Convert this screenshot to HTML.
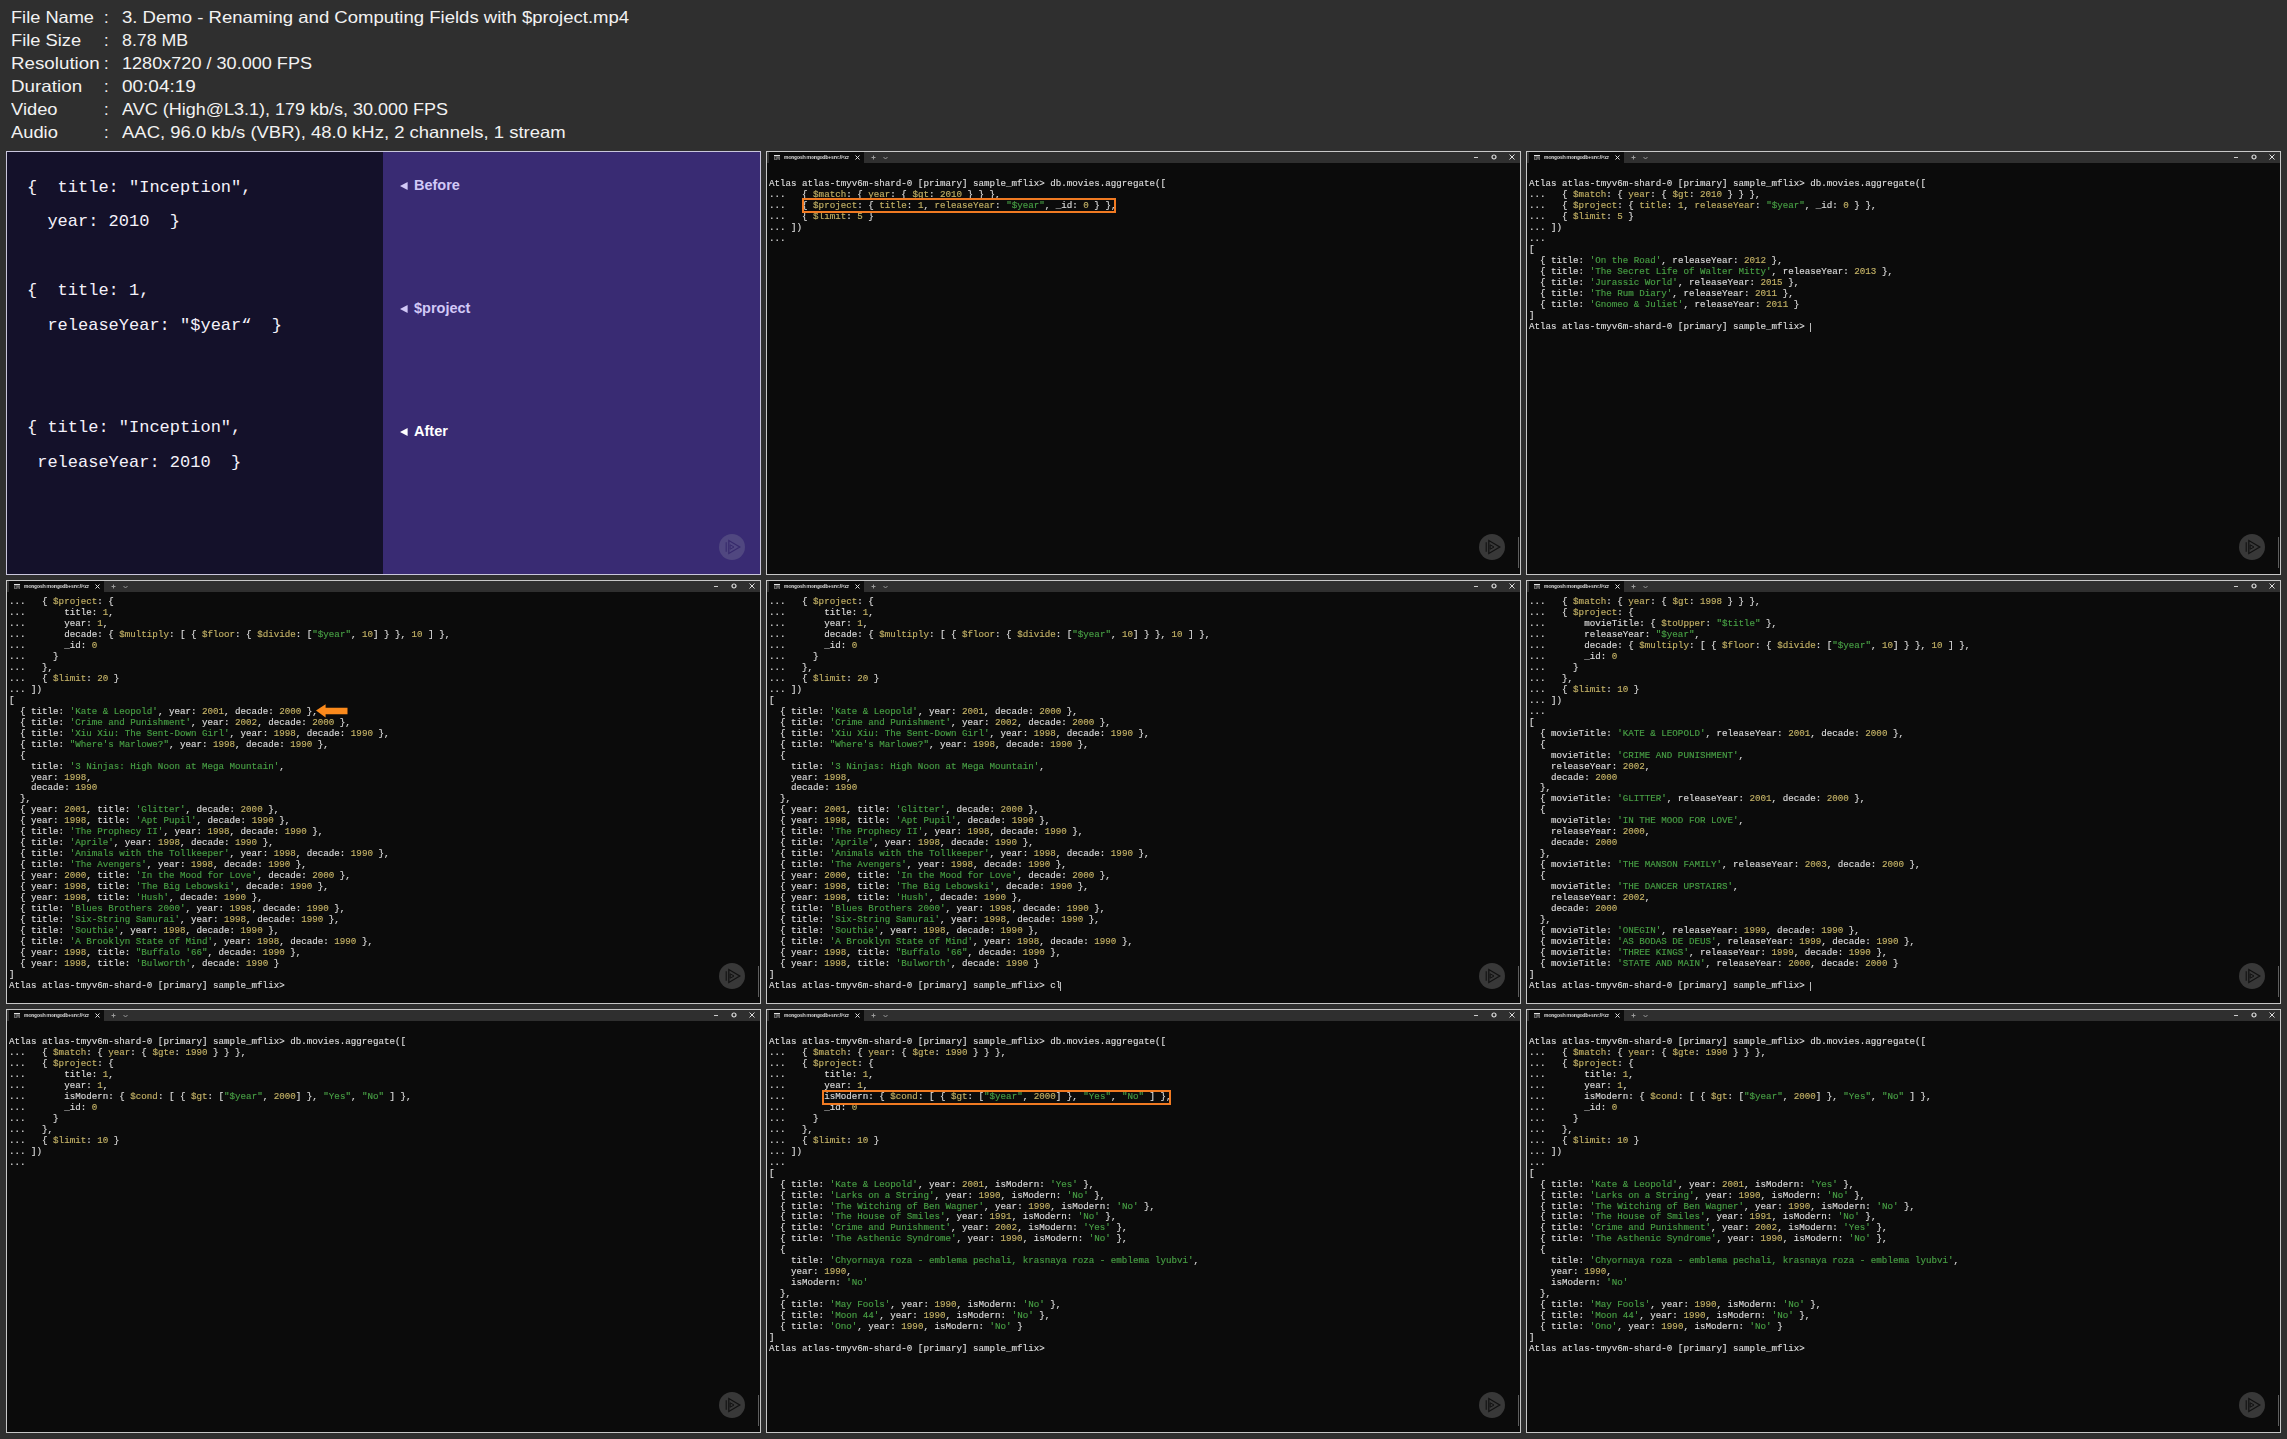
<!DOCTYPE html><html><head><meta charset="utf-8"><style>
*{margin:0;padding:0;box-sizing:border-box}
html,body{width:2287px;height:1439px;overflow:hidden;background:#2f2f2f}
body{position:relative;font-family:"Liberation Sans",sans-serif}
.hd{position:absolute;left:0;top:0;color:#f2f2f2;font-size:16.5px;white-space:pre}
.hd div{position:absolute;white-space:pre;line-height:20px}
.fr{position:absolute;width:755px;height:424px;border:1px solid #c8c8c8;overflow:hidden}
.term{background:#0b0b0b}
.tb{position:absolute;left:0;top:0;width:753px;height:11px;background:#2f2f2f}
.tab{position:absolute;left:2px;top:0;width:95px;height:11px;background:#0b0b0b}
.tt{position:absolute;left:16.5px;top:1.1px;font-size:6px;line-height:9px;color:#dcdcdc;font-weight:bold;white-space:pre;letter-spacing:-0.2px;transform:scaleX(0.835);transform-origin:0 0;will-change:transform}
.code{position:absolute;left:1.9px;font-family:"Liberation Mono",monospace;font-size:9.2px;line-height:10.97px;color:#dcdcdc;white-space:pre;will-change:transform;-webkit-text-stroke:0.15px currentColor}
.code b{font-weight:normal}
.play{position:absolute;width:26px;height:26px;border-radius:50%;background:#383838}
.sb{position:absolute;left:751px;top:385px;width:1px;height:31px;background:#5e5e5e}
</style></head><body><div class="hd"><div style="left:11px;top:7.3px;transform:scaleX(1.103);transform-origin:0 0">File Name</div><div style="left:104px;top:7.3px">:</div><div class="hv" style="left:121.5px;top:7.3px;transform:scaleX(1.124);transform-origin:0 0">3. Demo - Renaming and Computing Fields with $project.mp4</div><div style="left:11px;top:30.3px;transform:scaleX(1.108);transform-origin:0 0">File Size</div><div style="left:104px;top:30.3px">:</div><div class="hv" style="left:121.5px;top:30.3px;transform:scaleX(1.077);transform-origin:0 0">8.78 MB</div><div style="left:11px;top:53.3px;transform:scaleX(1.137);transform-origin:0 0">Resolution</div><div style="left:104px;top:53.3px">:</div><div class="hv" style="left:121.5px;top:53.3px;transform:scaleX(1.096);transform-origin:0 0">1280x720 / 30.000 FPS</div><div style="left:11px;top:76.3px;transform:scaleX(1.140);transform-origin:0 0">Duration</div><div style="left:104px;top:76.3px">:</div><div class="hv" style="left:121.5px;top:76.3px;transform:scaleX(1.149);transform-origin:0 0">00:04:19</div><div style="left:11px;top:99.3px;transform:scaleX(1.110);transform-origin:0 0">Video</div><div style="left:104px;top:99.3px">:</div><div class="hv" style="left:121.5px;top:99.3px;transform:scaleX(1.091);transform-origin:0 0">AVC (High@L3.1), 179 kb/s, 30.000 FPS</div><div style="left:11px;top:122.3px;transform:scaleX(1.110);transform-origin:0 0">Audio</div><div style="left:104px;top:122.3px">:</div><div class="hv" style="left:121.5px;top:122.3px;transform:scaleX(1.120);transform-origin:0 0">AAC, 96.0 kb/s (VBR), 48.0 kHz, 2 channels, 1 stream</div></div>
<div class="fr" style="left:6px;top:151px;background:#14112a;border-color:#c9c6dc">
<div style="position:absolute;left:376px;top:0;width:377px;height:422px;background:#392b73"></div>
<div style="position:absolute;left:20px;top:1.5px;font-family:'Liberation Mono',monospace;font-size:17px;color:#f4f2fa;white-space:pre">
<div style="position:absolute;top:24px">{  title: "Inception",</div>
<div style="position:absolute;top:58px">  year: 2010  }</div>
<div style="position:absolute;top:127px">{  title: 1,</div>
<div style="position:absolute;top:162px">  releaseYear: "$year&#8220;  }</div>
<div style="position:absolute;top:264px">{ title: "Inception",</div>
<div style="position:absolute;top:299px"> releaseYear: 2010  }</div>
</div>
<svg style="position:absolute;left:392.5px;top:30px" width="8" height="8" viewBox="0 0 8 8"><path d="M0 4L7.6 0V8Z" fill="#d2c9f7"/></svg>
<div style="position:absolute;left:407px;top:24.5px;font-weight:bold;font-size:14.5px;color:#d2c9f7;white-space:pre">Before</div>
<svg style="position:absolute;left:392.5px;top:153px" width="8" height="8" viewBox="0 0 8 8"><path d="M0 4L7.6 0V8Z" fill="#d2c9f7"/></svg>
<div style="position:absolute;left:407px;top:147.5px;font-weight:bold;font-size:14.5px;color:#d2c9f7;white-space:pre">$project</div>
<svg style="position:absolute;left:392.5px;top:276px" width="8" height="8" viewBox="0 0 8 8"><path d="M0 4L7.6 0V8Z" fill="#ffffff"/></svg>
<div style="position:absolute;left:407px;top:270.5px;font-weight:bold;font-size:14.5px;color:#ffffff;white-space:pre">After</div>
<svg style="position:absolute;left:712px;top:382px" width="26" height="26" viewBox="0 0 26 26"><circle cx="13" cy="13" r="13" fill="#504780"/><path d="M9.8 6.6L20.8 13L9.8 19.4Z" fill="none" stroke="#372a6c" stroke-width="1.2"/><path d="M7.2 8.3V17.7" stroke="#372a6c" stroke-width="1.1"/><path d="M11.2 10.8L15 13L11.2 15.2Z" fill="none" stroke="#372a6c" stroke-width="1"/></svg></div>
<div class="fr term" style="left:766px;top:151px"><div class="tb"><div class="tab"></div>
<svg style="position:absolute;left:7px;top:3px" width="6" height="5" viewBox="0 0 6 5"><rect x="0" y="0" width="6" height="1" fill="#e0e0e0"/><rect x="0" y="1.2" width="6" height="3.8" fill="#6a6a6a"/><path d="M1 2L2.3 3L1 4" stroke="#151515" stroke-width="0.8" fill="none"/><path d="M3 4.2H5" stroke="#151515" stroke-width="0.8"/></svg>
<div class="tt">mongosh mongodb+srv://&lt;cr</div>
<svg style="position:absolute;left:88px;top:3px" width="5" height="5" viewBox="0 0 5 5"><path d="M0.5 0.5L4.5 4.5M4.5 0.5L0.5 4.5" stroke="#ddd" stroke-width="1"/></svg>
<svg style="position:absolute;left:104px;top:3px" width="5" height="5" viewBox="0 0 5 5"><path d="M2.5 0.5V4.5M0.5 2.5H4.5" stroke="#999" stroke-width="1"/></svg>
<svg style="position:absolute;left:116px;top:4px" width="5" height="4" viewBox="0 0 5 4"><path d="M0.5 1L2.5 3L4.5 1" stroke="#999" fill="none" stroke-width="1"/></svg>
<svg style="position:absolute;left:706px;top:2.5px" width="6" height="5" viewBox="0 0 6 5"><path d="M1 2.5H5" stroke="#ccc" stroke-width="1"/></svg>
<svg style="position:absolute;left:724px;top:2px" width="6" height="6" viewBox="0 0 6 6"><circle cx="3" cy="3" r="2" fill="none" stroke="#ddd" stroke-width="1.2"/></svg>
<svg style="position:absolute;left:742px;top:2px" width="6" height="6" viewBox="0 0 6 6"><path d="M0.5 0.5L5.5 5.5M5.5 0.5L0.5 5.5" stroke="#ddd" stroke-width="1"/></svg>
</div>
<div class="code" style="top:16.02px">
<span style="color:#dcdcdc">Atlas atlas-tmyv6m-shard-0 [primary] sample_mflix&gt; db.movies.aggregate([</span>
...   { <b style="color:#c4b266">$match</b>: { <b style="color:#c4b266">year</b>: { <b style="color:#c4b266">$gt</b>: <b style="color:#c4b266">2010</b> } } },
...   { <b style="color:#c4b266">$project</b>: { <b style="color:#c4b266">title</b>: <b style="color:#c4b266">1</b>, <b style="color:#c4b266">releaseYear</b>: <b style="color:#48a045">"$year"</b>, _id: <b style="color:#c4b266">0</b> } },
...   { <b style="color:#c4b266">$limit</b>: <b style="color:#c4b266">5</b> }
... ])
...</div><div style="position:absolute;left:35px;top:45.5px;width:314px;height:15.5px;border:2px solid #f07a22"></div><svg style="position:absolute;left:712px;top:382px" width="26" height="26" viewBox="0 0 26 26"><circle cx="13" cy="13" r="13" fill="#383838"/><path d="M9.8 6.6L20.8 13L9.8 19.4Z" fill="none" stroke="#111" stroke-width="1.2"/><path d="M7.2 8.3V17.7" stroke="#111" stroke-width="1.1"/><path d="M11.2 10.8L15 13L11.2 15.2Z" fill="none" stroke="#111" stroke-width="1"/></svg><div class="sb"></div></div>
<div class="fr term" style="left:1526px;top:151px"><div class="tb"><div class="tab"></div>
<svg style="position:absolute;left:7px;top:3px" width="6" height="5" viewBox="0 0 6 5"><rect x="0" y="0" width="6" height="1" fill="#e0e0e0"/><rect x="0" y="1.2" width="6" height="3.8" fill="#6a6a6a"/><path d="M1 2L2.3 3L1 4" stroke="#151515" stroke-width="0.8" fill="none"/><path d="M3 4.2H5" stroke="#151515" stroke-width="0.8"/></svg>
<div class="tt">mongosh mongodb+srv://&lt;cr</div>
<svg style="position:absolute;left:88px;top:3px" width="5" height="5" viewBox="0 0 5 5"><path d="M0.5 0.5L4.5 4.5M4.5 0.5L0.5 4.5" stroke="#ddd" stroke-width="1"/></svg>
<svg style="position:absolute;left:104px;top:3px" width="5" height="5" viewBox="0 0 5 5"><path d="M2.5 0.5V4.5M0.5 2.5H4.5" stroke="#999" stroke-width="1"/></svg>
<svg style="position:absolute;left:116px;top:4px" width="5" height="4" viewBox="0 0 5 4"><path d="M0.5 1L2.5 3L4.5 1" stroke="#999" fill="none" stroke-width="1"/></svg>
<svg style="position:absolute;left:706px;top:2.5px" width="6" height="5" viewBox="0 0 6 5"><path d="M1 2.5H5" stroke="#ccc" stroke-width="1"/></svg>
<svg style="position:absolute;left:724px;top:2px" width="6" height="6" viewBox="0 0 6 6"><circle cx="3" cy="3" r="2" fill="none" stroke="#ddd" stroke-width="1.2"/></svg>
<svg style="position:absolute;left:742px;top:2px" width="6" height="6" viewBox="0 0 6 6"><path d="M0.5 0.5L5.5 5.5M5.5 0.5L0.5 5.5" stroke="#ddd" stroke-width="1"/></svg>
</div>
<div class="code" style="top:16.02px">
<span style="color:#dcdcdc">Atlas atlas-tmyv6m-shard-0 [primary] sample_mflix&gt; db.movies.aggregate([</span>
...   { <b style="color:#c4b266">$match</b>: { <b style="color:#c4b266">year</b>: { <b style="color:#c4b266">$gt</b>: <b style="color:#c4b266">2010</b> } } },
...   { <b style="color:#c4b266">$project</b>: { <b style="color:#c4b266">title</b>: <b style="color:#c4b266">1</b>, <b style="color:#c4b266">releaseYear</b>: <b style="color:#48a045">"$year"</b>, _id: <b style="color:#c4b266">0</b> } },
...   { <b style="color:#c4b266">$limit</b>: <b style="color:#c4b266">5</b> }
... ])
...
[
  { title: <b style="color:#48a045">'On the Road'</b>, releaseYear: <b style="color:#c4b266">2012</b> },
  { title: <b style="color:#48a045">'The Secret Life of Walter Mitty'</b>, releaseYear: <b style="color:#c4b266">2013</b> },
  { title: <b style="color:#48a045">'Jurassic World'</b>, releaseYear: <b style="color:#c4b266">2015</b> },
  { title: <b style="color:#48a045">'The Rum Diary'</b>, releaseYear: <b style="color:#c4b266">2011</b> },
  { title: <b style="color:#48a045">'Gnomeo &amp; Juliet'</b>, releaseYear: <b style="color:#c4b266">2011</b> }
]
<span style="color:#dcdcdc">Atlas atlas-tmyv6m-shard-0 [primary] sample_mflix&gt; </span></div><div style="position:absolute;left:282.87px;top:170.60px;width:1px;height:9px;background:#bbbbbb"></div><svg style="position:absolute;left:712px;top:382px" width="26" height="26" viewBox="0 0 26 26"><circle cx="13" cy="13" r="13" fill="#383838"/><path d="M9.8 6.6L20.8 13L9.8 19.4Z" fill="none" stroke="#111" stroke-width="1.2"/><path d="M7.2 8.3V17.7" stroke="#111" stroke-width="1.1"/><path d="M11.2 10.8L15 13L11.2 15.2Z" fill="none" stroke="#111" stroke-width="1"/></svg><div class="sb"></div></div>
<div class="fr term" style="left:6px;top:580px"><div class="tb"><div class="tab"></div>
<svg style="position:absolute;left:7px;top:3px" width="6" height="5" viewBox="0 0 6 5"><rect x="0" y="0" width="6" height="1" fill="#e0e0e0"/><rect x="0" y="1.2" width="6" height="3.8" fill="#6a6a6a"/><path d="M1 2L2.3 3L1 4" stroke="#151515" stroke-width="0.8" fill="none"/><path d="M3 4.2H5" stroke="#151515" stroke-width="0.8"/></svg>
<div class="tt">mongosh mongodb+srv://&lt;cr</div>
<svg style="position:absolute;left:88px;top:3px" width="5" height="5" viewBox="0 0 5 5"><path d="M0.5 0.5L4.5 4.5M4.5 0.5L0.5 4.5" stroke="#ddd" stroke-width="1"/></svg>
<svg style="position:absolute;left:104px;top:3px" width="5" height="5" viewBox="0 0 5 5"><path d="M2.5 0.5V4.5M0.5 2.5H4.5" stroke="#999" stroke-width="1"/></svg>
<svg style="position:absolute;left:116px;top:4px" width="5" height="4" viewBox="0 0 5 4"><path d="M0.5 1L2.5 3L4.5 1" stroke="#999" fill="none" stroke-width="1"/></svg>
<svg style="position:absolute;left:706px;top:2.5px" width="6" height="5" viewBox="0 0 6 5"><path d="M1 2.5H5" stroke="#ccc" stroke-width="1"/></svg>
<svg style="position:absolute;left:724px;top:2px" width="6" height="6" viewBox="0 0 6 6"><circle cx="3" cy="3" r="2" fill="none" stroke="#ddd" stroke-width="1.2"/></svg>
<svg style="position:absolute;left:742px;top:2px" width="6" height="6" viewBox="0 0 6 6"><path d="M0.5 0.5L5.5 5.5M5.5 0.5L0.5 5.5" stroke="#ddd" stroke-width="1"/></svg>
</div>
<div class="code" style="top:16.02px">...   { <b style="color:#c4b266">$project</b>: {
...       title: <b style="color:#c4b266">1</b>,
...       year: <b style="color:#c4b266">1</b>,
...       decade: { <b style="color:#c4b266">$multiply</b>: [ { <b style="color:#c4b266">$floor</b>: { <b style="color:#c4b266">$divide</b>: [<b style="color:#48a045">"$year"</b>, <b style="color:#c4b266">10</b>] } }, <b style="color:#c4b266">10</b> ] },
...       _id: <b style="color:#c4b266">0</b>
...     }
...   },
...   { <b style="color:#c4b266">$limit</b>: <b style="color:#c4b266">20</b> }
... ])
[
  { title: <b style="color:#48a045">'Kate &amp; Leopold'</b>, year: <b style="color:#c4b266">2001</b>, decade: <b style="color:#c4b266">2000</b> },
  { title: <b style="color:#48a045">'Crime and Punishment'</b>, year: <b style="color:#c4b266">2002</b>, decade: <b style="color:#c4b266">2000</b> },
  { title: <b style="color:#48a045">'Xiu Xiu: The Sent-Down Girl'</b>, year: <b style="color:#c4b266">1998</b>, decade: <b style="color:#c4b266">1990</b> },
  { title: <b style="color:#48a045">"Where's Marlowe?"</b>, year: <b style="color:#c4b266">1998</b>, decade: <b style="color:#c4b266">1990</b> },
  {
    title: <b style="color:#48a045">'3 Ninjas: High Noon at Mega Mountain'</b>,
    year: <b style="color:#c4b266">1998</b>,
    decade: <b style="color:#c4b266">1990</b>
  },
  { year: <b style="color:#c4b266">2001</b>, title: <b style="color:#48a045">'Glitter'</b>, decade: <b style="color:#c4b266">2000</b> },
  { year: <b style="color:#c4b266">1998</b>, title: <b style="color:#48a045">'Apt Pupil'</b>, decade: <b style="color:#c4b266">1990</b> },
  { title: <b style="color:#48a045">'The Prophecy II'</b>, year: <b style="color:#c4b266">1998</b>, decade: <b style="color:#c4b266">1990</b> },
  { title: <b style="color:#48a045">'Aprile'</b>, year: <b style="color:#c4b266">1998</b>, decade: <b style="color:#c4b266">1990</b> },
  { title: <b style="color:#48a045">'Animals with the Tollkeeper'</b>, year: <b style="color:#c4b266">1998</b>, decade: <b style="color:#c4b266">1990</b> },
  { title: <b style="color:#48a045">'The Avengers'</b>, year: <b style="color:#c4b266">1998</b>, decade: <b style="color:#c4b266">1990</b> },
  { year: <b style="color:#c4b266">2000</b>, title: <b style="color:#48a045">'In the Mood for Love'</b>, decade: <b style="color:#c4b266">2000</b> },
  { year: <b style="color:#c4b266">1998</b>, title: <b style="color:#48a045">'The Big Lebowski'</b>, decade: <b style="color:#c4b266">1990</b> },
  { year: <b style="color:#c4b266">1998</b>, title: <b style="color:#48a045">'Hush'</b>, decade: <b style="color:#c4b266">1990</b> },
  { title: <b style="color:#48a045">'Blues Brothers 2000'</b>, year: <b style="color:#c4b266">1998</b>, decade: <b style="color:#c4b266">1990</b> },
  { title: <b style="color:#48a045">'Six-String Samurai'</b>, year: <b style="color:#c4b266">1998</b>, decade: <b style="color:#c4b266">1990</b> },
  { title: <b style="color:#48a045">'Southie'</b>, year: <b style="color:#c4b266">1998</b>, decade: <b style="color:#c4b266">1990</b> },
  { title: <b style="color:#48a045">'A Brooklyn State of Mind'</b>, year: <b style="color:#c4b266">1998</b>, decade: <b style="color:#c4b266">1990</b> },
  { year: <b style="color:#c4b266">1998</b>, title: <b style="color:#48a045">"Buffalo '66"</b>, decade: <b style="color:#c4b266">1990</b> },
  { year: <b style="color:#c4b266">1998</b>, title: <b style="color:#48a045">'Bulworth'</b>, decade: <b style="color:#c4b266">1990</b> }
]
<span style="color:#dcdcdc">Atlas atlas-tmyv6m-shard-0 [primary] sample_mflix&gt;</span></div><svg style="position:absolute;left:309px;top:123px" width="33" height="14" viewBox="0 0 33 14"><path d="M0 6.5L9.6 0.2V3.7H31.5V10.2H9.6V13.5Z" fill="#fb8a1c"/></svg><svg style="position:absolute;left:712px;top:382px" width="26" height="26" viewBox="0 0 26 26"><circle cx="13" cy="13" r="13" fill="#383838"/><path d="M9.8 6.6L20.8 13L9.8 19.4Z" fill="none" stroke="#111" stroke-width="1.2"/><path d="M7.2 8.3V17.7" stroke="#111" stroke-width="1.1"/><path d="M11.2 10.8L15 13L11.2 15.2Z" fill="none" stroke="#111" stroke-width="1"/></svg><div class="sb"></div></div>
<div class="fr term" style="left:766px;top:580px"><div class="tb"><div class="tab"></div>
<svg style="position:absolute;left:7px;top:3px" width="6" height="5" viewBox="0 0 6 5"><rect x="0" y="0" width="6" height="1" fill="#e0e0e0"/><rect x="0" y="1.2" width="6" height="3.8" fill="#6a6a6a"/><path d="M1 2L2.3 3L1 4" stroke="#151515" stroke-width="0.8" fill="none"/><path d="M3 4.2H5" stroke="#151515" stroke-width="0.8"/></svg>
<div class="tt">mongosh mongodb+srv://&lt;cr</div>
<svg style="position:absolute;left:88px;top:3px" width="5" height="5" viewBox="0 0 5 5"><path d="M0.5 0.5L4.5 4.5M4.5 0.5L0.5 4.5" stroke="#ddd" stroke-width="1"/></svg>
<svg style="position:absolute;left:104px;top:3px" width="5" height="5" viewBox="0 0 5 5"><path d="M2.5 0.5V4.5M0.5 2.5H4.5" stroke="#999" stroke-width="1"/></svg>
<svg style="position:absolute;left:116px;top:4px" width="5" height="4" viewBox="0 0 5 4"><path d="M0.5 1L2.5 3L4.5 1" stroke="#999" fill="none" stroke-width="1"/></svg>
<svg style="position:absolute;left:706px;top:2.5px" width="6" height="5" viewBox="0 0 6 5"><path d="M1 2.5H5" stroke="#ccc" stroke-width="1"/></svg>
<svg style="position:absolute;left:724px;top:2px" width="6" height="6" viewBox="0 0 6 6"><circle cx="3" cy="3" r="2" fill="none" stroke="#ddd" stroke-width="1.2"/></svg>
<svg style="position:absolute;left:742px;top:2px" width="6" height="6" viewBox="0 0 6 6"><path d="M0.5 0.5L5.5 5.5M5.5 0.5L0.5 5.5" stroke="#ddd" stroke-width="1"/></svg>
</div>
<div class="code" style="top:16.02px">...   { <b style="color:#c4b266">$project</b>: {
...       title: <b style="color:#c4b266">1</b>,
...       year: <b style="color:#c4b266">1</b>,
...       decade: { <b style="color:#c4b266">$multiply</b>: [ { <b style="color:#c4b266">$floor</b>: { <b style="color:#c4b266">$divide</b>: [<b style="color:#48a045">"$year"</b>, <b style="color:#c4b266">10</b>] } }, <b style="color:#c4b266">10</b> ] },
...       _id: <b style="color:#c4b266">0</b>
...     }
...   },
...   { <b style="color:#c4b266">$limit</b>: <b style="color:#c4b266">20</b> }
... ])
[
  { title: <b style="color:#48a045">'Kate &amp; Leopold'</b>, year: <b style="color:#c4b266">2001</b>, decade: <b style="color:#c4b266">2000</b> },
  { title: <b style="color:#48a045">'Crime and Punishment'</b>, year: <b style="color:#c4b266">2002</b>, decade: <b style="color:#c4b266">2000</b> },
  { title: <b style="color:#48a045">'Xiu Xiu: The Sent-Down Girl'</b>, year: <b style="color:#c4b266">1998</b>, decade: <b style="color:#c4b266">1990</b> },
  { title: <b style="color:#48a045">"Where's Marlowe?"</b>, year: <b style="color:#c4b266">1998</b>, decade: <b style="color:#c4b266">1990</b> },
  {
    title: <b style="color:#48a045">'3 Ninjas: High Noon at Mega Mountain'</b>,
    year: <b style="color:#c4b266">1998</b>,
    decade: <b style="color:#c4b266">1990</b>
  },
  { year: <b style="color:#c4b266">2001</b>, title: <b style="color:#48a045">'Glitter'</b>, decade: <b style="color:#c4b266">2000</b> },
  { year: <b style="color:#c4b266">1998</b>, title: <b style="color:#48a045">'Apt Pupil'</b>, decade: <b style="color:#c4b266">1990</b> },
  { title: <b style="color:#48a045">'The Prophecy II'</b>, year: <b style="color:#c4b266">1998</b>, decade: <b style="color:#c4b266">1990</b> },
  { title: <b style="color:#48a045">'Aprile'</b>, year: <b style="color:#c4b266">1998</b>, decade: <b style="color:#c4b266">1990</b> },
  { title: <b style="color:#48a045">'Animals with the Tollkeeper'</b>, year: <b style="color:#c4b266">1998</b>, decade: <b style="color:#c4b266">1990</b> },
  { title: <b style="color:#48a045">'The Avengers'</b>, year: <b style="color:#c4b266">1998</b>, decade: <b style="color:#c4b266">1990</b> },
  { year: <b style="color:#c4b266">2000</b>, title: <b style="color:#48a045">'In the Mood for Love'</b>, decade: <b style="color:#c4b266">2000</b> },
  { year: <b style="color:#c4b266">1998</b>, title: <b style="color:#48a045">'The Big Lebowski'</b>, decade: <b style="color:#c4b266">1990</b> },
  { year: <b style="color:#c4b266">1998</b>, title: <b style="color:#48a045">'Hush'</b>, decade: <b style="color:#c4b266">1990</b> },
  { title: <b style="color:#48a045">'Blues Brothers 2000'</b>, year: <b style="color:#c4b266">1998</b>, decade: <b style="color:#c4b266">1990</b> },
  { title: <b style="color:#48a045">'Six-String Samurai'</b>, year: <b style="color:#c4b266">1998</b>, decade: <b style="color:#c4b266">1990</b> },
  { title: <b style="color:#48a045">'Southie'</b>, year: <b style="color:#c4b266">1998</b>, decade: <b style="color:#c4b266">1990</b> },
  { title: <b style="color:#48a045">'A Brooklyn State of Mind'</b>, year: <b style="color:#c4b266">1998</b>, decade: <b style="color:#c4b266">1990</b> },
  { year: <b style="color:#c4b266">1998</b>, title: <b style="color:#48a045">"Buffalo '66"</b>, decade: <b style="color:#c4b266">1990</b> },
  { year: <b style="color:#c4b266">1998</b>, title: <b style="color:#48a045">'Bulworth'</b>, decade: <b style="color:#c4b266">1990</b> }
]
<span style="color:#dcdcdc">Atlas atlas-tmyv6m-shard-0 [primary] sample_mflix&gt; cl</span></div><div style="position:absolute;left:293.08px;top:400.97px;width:1px;height:9px;background:#bbbbbb"></div><svg style="position:absolute;left:712px;top:382px" width="26" height="26" viewBox="0 0 26 26"><circle cx="13" cy="13" r="13" fill="#383838"/><path d="M9.8 6.6L20.8 13L9.8 19.4Z" fill="none" stroke="#111" stroke-width="1.2"/><path d="M7.2 8.3V17.7" stroke="#111" stroke-width="1.1"/><path d="M11.2 10.8L15 13L11.2 15.2Z" fill="none" stroke="#111" stroke-width="1"/></svg><div class="sb"></div></div>
<div class="fr term" style="left:1526px;top:580px"><div class="tb"><div class="tab"></div>
<svg style="position:absolute;left:7px;top:3px" width="6" height="5" viewBox="0 0 6 5"><rect x="0" y="0" width="6" height="1" fill="#e0e0e0"/><rect x="0" y="1.2" width="6" height="3.8" fill="#6a6a6a"/><path d="M1 2L2.3 3L1 4" stroke="#151515" stroke-width="0.8" fill="none"/><path d="M3 4.2H5" stroke="#151515" stroke-width="0.8"/></svg>
<div class="tt">mongosh mongodb+srv://&lt;cr</div>
<svg style="position:absolute;left:88px;top:3px" width="5" height="5" viewBox="0 0 5 5"><path d="M0.5 0.5L4.5 4.5M4.5 0.5L0.5 4.5" stroke="#ddd" stroke-width="1"/></svg>
<svg style="position:absolute;left:104px;top:3px" width="5" height="5" viewBox="0 0 5 5"><path d="M2.5 0.5V4.5M0.5 2.5H4.5" stroke="#999" stroke-width="1"/></svg>
<svg style="position:absolute;left:116px;top:4px" width="5" height="4" viewBox="0 0 5 4"><path d="M0.5 1L2.5 3L4.5 1" stroke="#999" fill="none" stroke-width="1"/></svg>
<svg style="position:absolute;left:706px;top:2.5px" width="6" height="5" viewBox="0 0 6 5"><path d="M1 2.5H5" stroke="#ccc" stroke-width="1"/></svg>
<svg style="position:absolute;left:724px;top:2px" width="6" height="6" viewBox="0 0 6 6"><circle cx="3" cy="3" r="2" fill="none" stroke="#ddd" stroke-width="1.2"/></svg>
<svg style="position:absolute;left:742px;top:2px" width="6" height="6" viewBox="0 0 6 6"><path d="M0.5 0.5L5.5 5.5M5.5 0.5L0.5 5.5" stroke="#ddd" stroke-width="1"/></svg>
</div>
<div class="code" style="top:16.02px">...   { <b style="color:#c4b266">$match</b>: { <b style="color:#c4b266">year</b>: { <b style="color:#c4b266">$gt</b>: <b style="color:#c4b266">1998</b> } } },
...   { <b style="color:#c4b266">$project</b>: {
...       movieTitle: { <b style="color:#c4b266">$toUpper</b>: <b style="color:#48a045">"$title"</b> },
...       releaseYear: <b style="color:#48a045">"$year"</b>,
...       decade: { <b style="color:#c4b266">$multiply</b>: [ { <b style="color:#c4b266">$floor</b>: { <b style="color:#c4b266">$divide</b>: [<b style="color:#48a045">"$year"</b>, <b style="color:#c4b266">10</b>] } }, <b style="color:#c4b266">10</b> ] },
...       _id: <b style="color:#c4b266">0</b>
...     }
...   },
...   { <b style="color:#c4b266">$limit</b>: <b style="color:#c4b266">10</b> }
... ])
...
[
  { movieTitle: <b style="color:#48a045">'KATE &amp; LEOPOLD'</b>, releaseYear: <b style="color:#c4b266">2001</b>, decade: <b style="color:#c4b266">2000</b> },
  {
    movieTitle: <b style="color:#48a045">'CRIME AND PUNISHMENT'</b>,
    releaseYear: <b style="color:#c4b266">2002</b>,
    decade: <b style="color:#c4b266">2000</b>
  },
  { movieTitle: <b style="color:#48a045">'GLITTER'</b>, releaseYear: <b style="color:#c4b266">2001</b>, decade: <b style="color:#c4b266">2000</b> },
  {
    movieTitle: <b style="color:#48a045">'IN THE MOOD FOR LOVE'</b>,
    releaseYear: <b style="color:#c4b266">2000</b>,
    decade: <b style="color:#c4b266">2000</b>
  },
  { movieTitle: <b style="color:#48a045">'THE MANSON FAMILY'</b>, releaseYear: <b style="color:#c4b266">2003</b>, decade: <b style="color:#c4b266">2000</b> },
  {
    movieTitle: <b style="color:#48a045">'THE DANCER UPSTAIRS'</b>,
    releaseYear: <b style="color:#c4b266">2002</b>,
    decade: <b style="color:#c4b266">2000</b>
  },
  { movieTitle: <b style="color:#48a045">'ONEGIN'</b>, releaseYear: <b style="color:#c4b266">1999</b>, decade: <b style="color:#c4b266">1990</b> },
  { movieTitle: <b style="color:#48a045">'AS BODAS DE DEUS'</b>, releaseYear: <b style="color:#c4b266">1999</b>, decade: <b style="color:#c4b266">1990</b> },
  { movieTitle: <b style="color:#48a045">'THREE KINGS'</b>, releaseYear: <b style="color:#c4b266">1999</b>, decade: <b style="color:#c4b266">1990</b> },
  { movieTitle: <b style="color:#48a045">'STATE AND MAIN'</b>, releaseYear: <b style="color:#c4b266">2000</b>, decade: <b style="color:#c4b266">2000</b> }
]
<span style="color:#dcdcdc">Atlas atlas-tmyv6m-shard-0 [primary] sample_mflix&gt; </span></div><div style="position:absolute;left:282.87px;top:400.97px;width:1px;height:9px;background:#bbbbbb"></div><svg style="position:absolute;left:712px;top:382px" width="26" height="26" viewBox="0 0 26 26"><circle cx="13" cy="13" r="13" fill="#383838"/><path d="M9.8 6.6L20.8 13L9.8 19.4Z" fill="none" stroke="#111" stroke-width="1.2"/><path d="M7.2 8.3V17.7" stroke="#111" stroke-width="1.1"/><path d="M11.2 10.8L15 13L11.2 15.2Z" fill="none" stroke="#111" stroke-width="1"/></svg><div class="sb"></div></div>
<div class="fr term" style="left:6px;top:1009px"><div class="tb"><div class="tab"></div>
<svg style="position:absolute;left:7px;top:3px" width="6" height="5" viewBox="0 0 6 5"><rect x="0" y="0" width="6" height="1" fill="#e0e0e0"/><rect x="0" y="1.2" width="6" height="3.8" fill="#6a6a6a"/><path d="M1 2L2.3 3L1 4" stroke="#151515" stroke-width="0.8" fill="none"/><path d="M3 4.2H5" stroke="#151515" stroke-width="0.8"/></svg>
<div class="tt">mongosh mongodb+srv://&lt;cr</div>
<svg style="position:absolute;left:88px;top:3px" width="5" height="5" viewBox="0 0 5 5"><path d="M0.5 0.5L4.5 4.5M4.5 0.5L0.5 4.5" stroke="#ddd" stroke-width="1"/></svg>
<svg style="position:absolute;left:104px;top:3px" width="5" height="5" viewBox="0 0 5 5"><path d="M2.5 0.5V4.5M0.5 2.5H4.5" stroke="#999" stroke-width="1"/></svg>
<svg style="position:absolute;left:116px;top:4px" width="5" height="4" viewBox="0 0 5 4"><path d="M0.5 1L2.5 3L4.5 1" stroke="#999" fill="none" stroke-width="1"/></svg>
<svg style="position:absolute;left:706px;top:2.5px" width="6" height="5" viewBox="0 0 6 5"><path d="M1 2.5H5" stroke="#ccc" stroke-width="1"/></svg>
<svg style="position:absolute;left:724px;top:2px" width="6" height="6" viewBox="0 0 6 6"><circle cx="3" cy="3" r="2" fill="none" stroke="#ddd" stroke-width="1.2"/></svg>
<svg style="position:absolute;left:742px;top:2px" width="6" height="6" viewBox="0 0 6 6"><path d="M0.5 0.5L5.5 5.5M5.5 0.5L0.5 5.5" stroke="#ddd" stroke-width="1"/></svg>
</div>
<div class="code" style="top:16.02px">
<span style="color:#dcdcdc">Atlas atlas-tmyv6m-shard-0 [primary] sample_mflix&gt; db.movies.aggregate([</span>
...   { <b style="color:#c4b266">$match</b>: { <b style="color:#c4b266">year</b>: { <b style="color:#c4b266">$gte</b>: <b style="color:#c4b266">1990</b> } } },
...   { <b style="color:#c4b266">$project</b>: {
...       title: <b style="color:#c4b266">1</b>,
...       year: <b style="color:#c4b266">1</b>,
...       isModern: { <b style="color:#c4b266">$cond</b>: [ { <b style="color:#c4b266">$gt</b>: [<b style="color:#48a045">"$year"</b>, <b style="color:#c4b266">2000</b>] }, <b style="color:#48a045">"Yes"</b>, <b style="color:#48a045">"No"</b> ] },
...       _id: <b style="color:#c4b266">0</b>
...     }
...   },
...   { <b style="color:#c4b266">$limit</b>: <b style="color:#c4b266">10</b> }
... ])
...</div><svg style="position:absolute;left:712px;top:382px" width="26" height="26" viewBox="0 0 26 26"><circle cx="13" cy="13" r="13" fill="#383838"/><path d="M9.8 6.6L20.8 13L9.8 19.4Z" fill="none" stroke="#111" stroke-width="1.2"/><path d="M7.2 8.3V17.7" stroke="#111" stroke-width="1.1"/><path d="M11.2 10.8L15 13L11.2 15.2Z" fill="none" stroke="#111" stroke-width="1"/></svg><div class="sb"></div></div>
<div class="fr term" style="left:766px;top:1009px"><div class="tb"><div class="tab"></div>
<svg style="position:absolute;left:7px;top:3px" width="6" height="5" viewBox="0 0 6 5"><rect x="0" y="0" width="6" height="1" fill="#e0e0e0"/><rect x="0" y="1.2" width="6" height="3.8" fill="#6a6a6a"/><path d="M1 2L2.3 3L1 4" stroke="#151515" stroke-width="0.8" fill="none"/><path d="M3 4.2H5" stroke="#151515" stroke-width="0.8"/></svg>
<div class="tt">mongosh mongodb+srv://&lt;cr</div>
<svg style="position:absolute;left:88px;top:3px" width="5" height="5" viewBox="0 0 5 5"><path d="M0.5 0.5L4.5 4.5M4.5 0.5L0.5 4.5" stroke="#ddd" stroke-width="1"/></svg>
<svg style="position:absolute;left:104px;top:3px" width="5" height="5" viewBox="0 0 5 5"><path d="M2.5 0.5V4.5M0.5 2.5H4.5" stroke="#999" stroke-width="1"/></svg>
<svg style="position:absolute;left:116px;top:4px" width="5" height="4" viewBox="0 0 5 4"><path d="M0.5 1L2.5 3L4.5 1" stroke="#999" fill="none" stroke-width="1"/></svg>
<svg style="position:absolute;left:706px;top:2.5px" width="6" height="5" viewBox="0 0 6 5"><path d="M1 2.5H5" stroke="#ccc" stroke-width="1"/></svg>
<svg style="position:absolute;left:724px;top:2px" width="6" height="6" viewBox="0 0 6 6"><circle cx="3" cy="3" r="2" fill="none" stroke="#ddd" stroke-width="1.2"/></svg>
<svg style="position:absolute;left:742px;top:2px" width="6" height="6" viewBox="0 0 6 6"><path d="M0.5 0.5L5.5 5.5M5.5 0.5L0.5 5.5" stroke="#ddd" stroke-width="1"/></svg>
</div>
<div class="code" style="top:16.02px">
<span style="color:#dcdcdc">Atlas atlas-tmyv6m-shard-0 [primary] sample_mflix&gt; db.movies.aggregate([</span>
...   { <b style="color:#c4b266">$match</b>: { <b style="color:#c4b266">year</b>: { <b style="color:#c4b266">$gte</b>: <b style="color:#c4b266">1990</b> } } },
...   { <b style="color:#c4b266">$project</b>: {
...       title: <b style="color:#c4b266">1</b>,
...       year: <b style="color:#c4b266">1</b>,
...       isModern: { <b style="color:#c4b266">$cond</b>: [ { <b style="color:#c4b266">$gt</b>: [<b style="color:#48a045">"$year"</b>, <b style="color:#c4b266">2000</b>] }, <b style="color:#48a045">"Yes"</b>, <b style="color:#48a045">"No"</b> ] },
...       _id: <b style="color:#c4b266">0</b>
...     }
...   },
...   { <b style="color:#c4b266">$limit</b>: <b style="color:#c4b266">10</b> }
... ])
...
[
  { title: <b style="color:#48a045">'Kate &amp; Leopold'</b>, year: <b style="color:#c4b266">2001</b>, isModern: <b style="color:#48a045">'Yes'</b> },
  { title: <b style="color:#48a045">'Larks on a String'</b>, year: <b style="color:#c4b266">1990</b>, isModern: <b style="color:#48a045">'No'</b> },
  { title: <b style="color:#48a045">'The Witching of Ben Wagner'</b>, year: <b style="color:#c4b266">1990</b>, isModern: <b style="color:#48a045">'No'</b> },
  { title: <b style="color:#48a045">'The House of Smiles'</b>, year: <b style="color:#c4b266">1991</b>, isModern: <b style="color:#48a045">'No'</b> },
  { title: <b style="color:#48a045">'Crime and Punishment'</b>, year: <b style="color:#c4b266">2002</b>, isModern: <b style="color:#48a045">'Yes'</b> },
  { title: <b style="color:#48a045">'The Asthenic Syndrome'</b>, year: <b style="color:#c4b266">1990</b>, isModern: <b style="color:#48a045">'No'</b> },
  {
    title: <b style="color:#48a045">'Chyornaya roza - emblema pechali, krasnaya roza - emblema lyubvi'</b>,
    year: <b style="color:#c4b266">1990</b>,
    isModern: <b style="color:#48a045">'No'</b>
  },
  { title: <b style="color:#48a045">'May Fools'</b>, year: <b style="color:#c4b266">1990</b>, isModern: <b style="color:#48a045">'No'</b> },
  { title: <b style="color:#48a045">'Moon 44'</b>, year: <b style="color:#c4b266">1990</b>, isModern: <b style="color:#48a045">'No'</b> },
  { title: <b style="color:#48a045">'Ono'</b>, year: <b style="color:#c4b266">1990</b>, isModern: <b style="color:#48a045">'No'</b> }
]
<span style="color:#dcdcdc">Atlas atlas-tmyv6m-shard-0 [primary] sample_mflix&gt;</span></div><div style="position:absolute;left:55px;top:79.5px;width:349px;height:15px;border:2px solid #f07a22"></div><svg style="position:absolute;left:712px;top:382px" width="26" height="26" viewBox="0 0 26 26"><circle cx="13" cy="13" r="13" fill="#383838"/><path d="M9.8 6.6L20.8 13L9.8 19.4Z" fill="none" stroke="#111" stroke-width="1.2"/><path d="M7.2 8.3V17.7" stroke="#111" stroke-width="1.1"/><path d="M11.2 10.8L15 13L11.2 15.2Z" fill="none" stroke="#111" stroke-width="1"/></svg><div class="sb"></div></div>
<div class="fr term" style="left:1526px;top:1009px"><div class="tb"><div class="tab"></div>
<svg style="position:absolute;left:7px;top:3px" width="6" height="5" viewBox="0 0 6 5"><rect x="0" y="0" width="6" height="1" fill="#e0e0e0"/><rect x="0" y="1.2" width="6" height="3.8" fill="#6a6a6a"/><path d="M1 2L2.3 3L1 4" stroke="#151515" stroke-width="0.8" fill="none"/><path d="M3 4.2H5" stroke="#151515" stroke-width="0.8"/></svg>
<div class="tt">mongosh mongodb+srv://&lt;cr</div>
<svg style="position:absolute;left:88px;top:3px" width="5" height="5" viewBox="0 0 5 5"><path d="M0.5 0.5L4.5 4.5M4.5 0.5L0.5 4.5" stroke="#ddd" stroke-width="1"/></svg>
<svg style="position:absolute;left:104px;top:3px" width="5" height="5" viewBox="0 0 5 5"><path d="M2.5 0.5V4.5M0.5 2.5H4.5" stroke="#999" stroke-width="1"/></svg>
<svg style="position:absolute;left:116px;top:4px" width="5" height="4" viewBox="0 0 5 4"><path d="M0.5 1L2.5 3L4.5 1" stroke="#999" fill="none" stroke-width="1"/></svg>
<svg style="position:absolute;left:706px;top:2.5px" width="6" height="5" viewBox="0 0 6 5"><path d="M1 2.5H5" stroke="#ccc" stroke-width="1"/></svg>
<svg style="position:absolute;left:724px;top:2px" width="6" height="6" viewBox="0 0 6 6"><circle cx="3" cy="3" r="2" fill="none" stroke="#ddd" stroke-width="1.2"/></svg>
<svg style="position:absolute;left:742px;top:2px" width="6" height="6" viewBox="0 0 6 6"><path d="M0.5 0.5L5.5 5.5M5.5 0.5L0.5 5.5" stroke="#ddd" stroke-width="1"/></svg>
</div>
<div class="code" style="top:16.02px">
<span style="color:#dcdcdc">Atlas atlas-tmyv6m-shard-0 [primary] sample_mflix&gt; db.movies.aggregate([</span>
...   { <b style="color:#c4b266">$match</b>: { <b style="color:#c4b266">year</b>: { <b style="color:#c4b266">$gte</b>: <b style="color:#c4b266">1990</b> } } },
...   { <b style="color:#c4b266">$project</b>: {
...       title: <b style="color:#c4b266">1</b>,
...       year: <b style="color:#c4b266">1</b>,
...       isModern: { <b style="color:#c4b266">$cond</b>: [ { <b style="color:#c4b266">$gt</b>: [<b style="color:#48a045">"$year"</b>, <b style="color:#c4b266">2000</b>] }, <b style="color:#48a045">"Yes"</b>, <b style="color:#48a045">"No"</b> ] },
...       _id: <b style="color:#c4b266">0</b>
...     }
...   },
...   { <b style="color:#c4b266">$limit</b>: <b style="color:#c4b266">10</b> }
... ])
...
[
  { title: <b style="color:#48a045">'Kate &amp; Leopold'</b>, year: <b style="color:#c4b266">2001</b>, isModern: <b style="color:#48a045">'Yes'</b> },
  { title: <b style="color:#48a045">'Larks on a String'</b>, year: <b style="color:#c4b266">1990</b>, isModern: <b style="color:#48a045">'No'</b> },
  { title: <b style="color:#48a045">'The Witching of Ben Wagner'</b>, year: <b style="color:#c4b266">1990</b>, isModern: <b style="color:#48a045">'No'</b> },
  { title: <b style="color:#48a045">'The House of Smiles'</b>, year: <b style="color:#c4b266">1991</b>, isModern: <b style="color:#48a045">'No'</b> },
  { title: <b style="color:#48a045">'Crime and Punishment'</b>, year: <b style="color:#c4b266">2002</b>, isModern: <b style="color:#48a045">'Yes'</b> },
  { title: <b style="color:#48a045">'The Asthenic Syndrome'</b>, year: <b style="color:#c4b266">1990</b>, isModern: <b style="color:#48a045">'No'</b> },
  {
    title: <b style="color:#48a045">'Chyornaya roza - emblema pechali, krasnaya roza - emblema lyubvi'</b>,
    year: <b style="color:#c4b266">1990</b>,
    isModern: <b style="color:#48a045">'No'</b>
  },
  { title: <b style="color:#48a045">'May Fools'</b>, year: <b style="color:#c4b266">1990</b>, isModern: <b style="color:#48a045">'No'</b> },
  { title: <b style="color:#48a045">'Moon 44'</b>, year: <b style="color:#c4b266">1990</b>, isModern: <b style="color:#48a045">'No'</b> },
  { title: <b style="color:#48a045">'Ono'</b>, year: <b style="color:#c4b266">1990</b>, isModern: <b style="color:#48a045">'No'</b> }
]
<span style="color:#dcdcdc">Atlas atlas-tmyv6m-shard-0 [primary] sample_mflix&gt;</span></div><svg style="position:absolute;left:712px;top:382px" width="26" height="26" viewBox="0 0 26 26"><circle cx="13" cy="13" r="13" fill="#383838"/><path d="M9.8 6.6L20.8 13L9.8 19.4Z" fill="none" stroke="#111" stroke-width="1.2"/><path d="M7.2 8.3V17.7" stroke="#111" stroke-width="1.1"/><path d="M11.2 10.8L15 13L11.2 15.2Z" fill="none" stroke="#111" stroke-width="1"/></svg><div class="sb"></div></div></body></html>
